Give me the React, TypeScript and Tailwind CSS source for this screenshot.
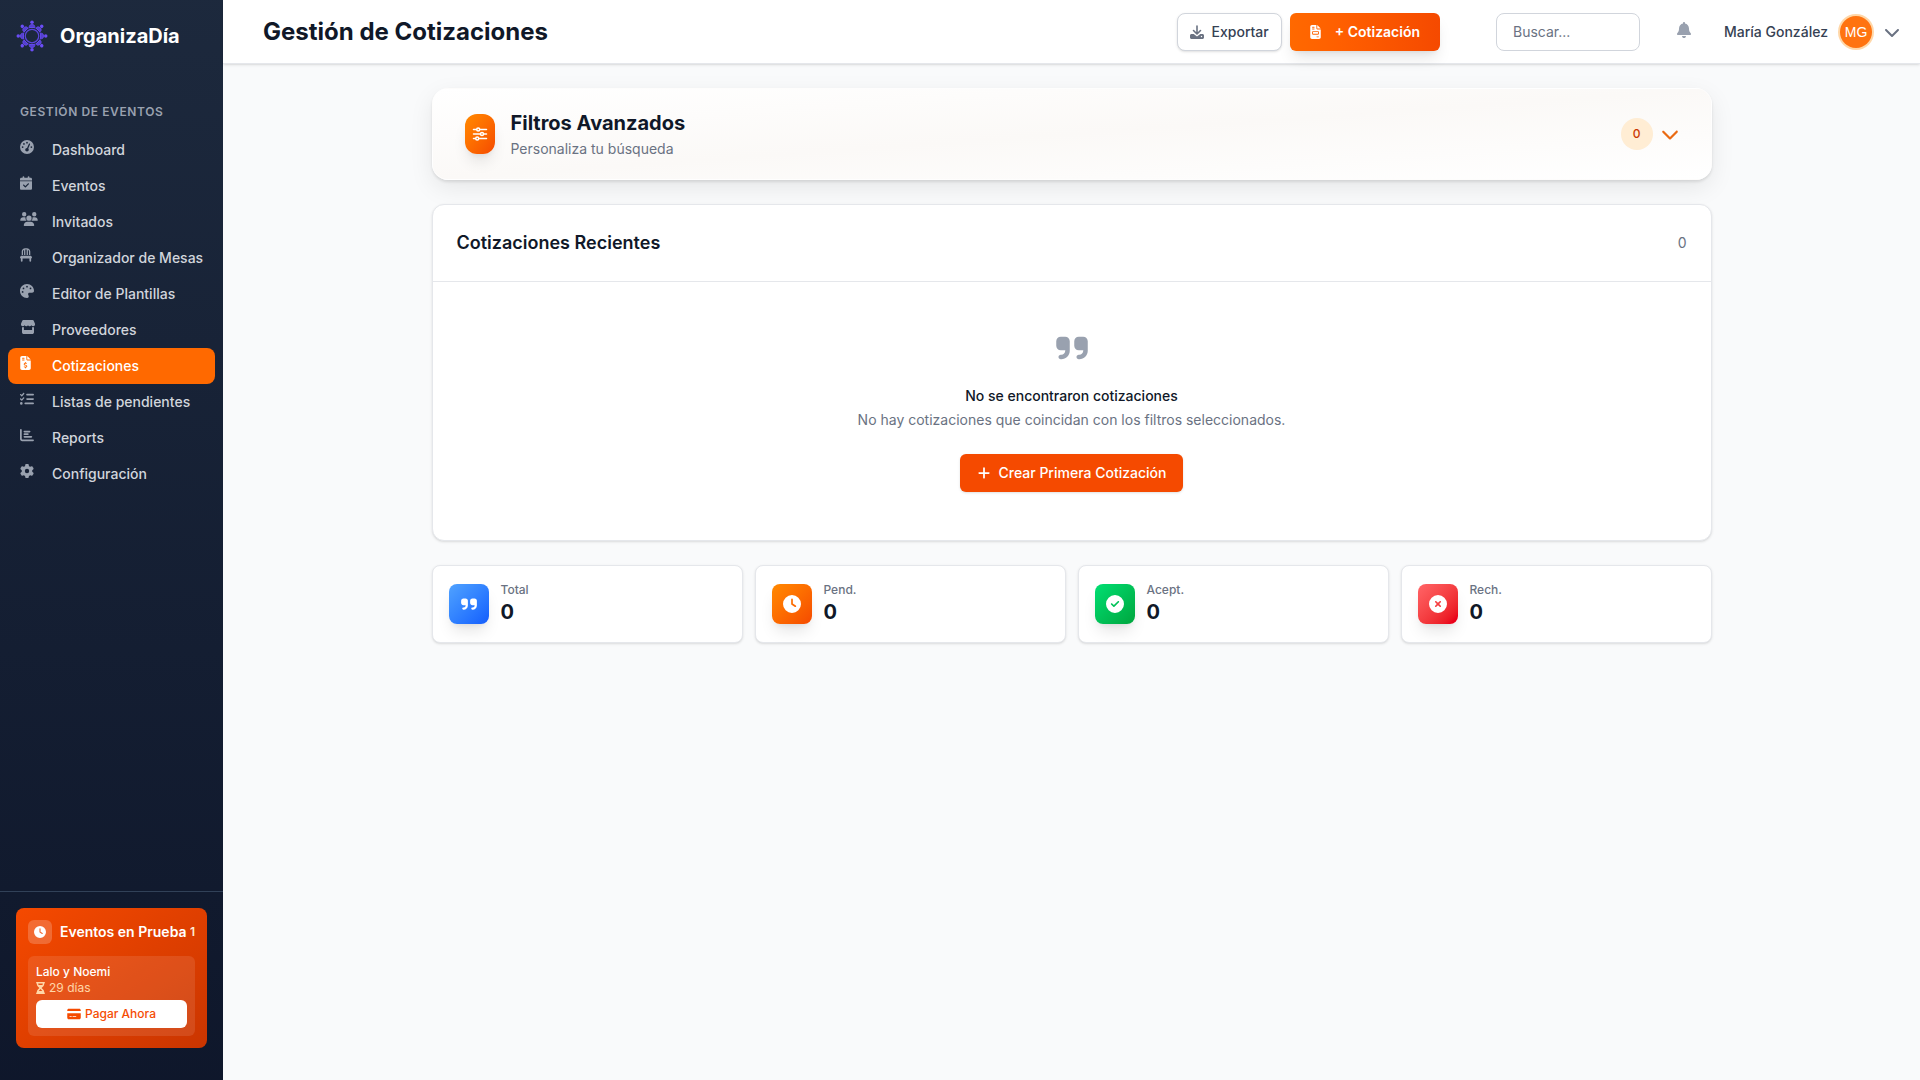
import type { ReactNode } from "react";
import {
  FaBell,
  FaCalendarCheck,
  FaChair,
  FaChartBar,
  FaChevronDown,
  FaCircleCheck,
  FaCircleXmark,
  FaClock,
  FaCreditCard,
  FaFileInvoice,
  FaFileInvoiceDollar,
  FaGaugeHigh,
  FaGear,
  FaHourglassHalf,
  FaListCheck,
  FaPalette,
  FaPlus,
  FaQuoteRight,
  FaUsers,
} from "react-icons/fa6";

const navItems: { label: string; icon: ReactNode; active?: boolean }[] = [
  { label: "Dashboard", icon: <FaGaugeHigh className="size-3.5" /> },
  { label: "Eventos", icon: <FaCalendarCheck className="h-3.5 w-3" /> },
  { label: "Invitados", icon: <FaUsers className="h-3.5 w-[18px]" /> },
  { label: "Organizador de Mesas", icon: <FaChair className="h-3.5 w-3" /> },
  { label: "Editor de Plantillas", icon: <FaPalette className="size-3.5" /> },
  { label: "Proveedores", icon: <StoreIcon /> },
  { label: "Cotizaciones", icon: <FaFileInvoiceDollar className="h-3.5 w-[11px]" />, active: true },
  { label: "Listas de pendientes", icon: <FaListCheck className="size-3.5" /> },
  { label: "Reports", icon: <FaChartBar className="size-3.5" /> },
  { label: "Configuración", icon: <FaGear className="size-3.5" /> },
];

const stats: { label: string; value: number; icon: ReactNode; tone: string }[] = [
  { label: "Total", value: 0, icon: <FaQuoteRight className="size-[18px]" />, tone: "from-blue-400 to-blue-600" },
  { label: "Pend.", value: 0, icon: <FaClock className="size-[18px]" />, tone: "from-orange-400 to-orange-600" },
  { label: "Acept.", value: 0, icon: <FaCircleCheck className="size-[18px]" />, tone: "from-green-400 to-green-600" },
  { label: "Rech.", value: 0, icon: <FaCircleXmark className="size-[18px]" />, tone: "from-red-400 to-red-600" },
];

function Logo() {
  const seats = [0, 45, 90, 135, 180, 225, 270, 315];
  return (
    <svg viewBox="0 0 64 64" className="size-8 shrink-0" fill="none" aria-hidden="true">
      <circle cx="32" cy="32" r="17.500" stroke="#4f3bc4" strokeWidth="2" />
      <circle cx="32" cy="32" r="13.500" stroke="#5b45dc" strokeWidth="2.500" />
      {seats.map((angle) => (
        <g key={angle} transform={`rotate(${angle} 32 32)`}>
          <circle cx="32" cy="4.500" r="3.500" fill="#6a4df5" />
          <path d="M26.500 15v-2c0-5.500 11-5.500 11 0v2Z" fill="#5540cf" stroke="#6a4df5" strokeWidth="1.500" strokeLinejoin="round" />
        </g>
      ))}
    </svg>
  );
}

function StoreIcon() {
  return (
    <svg viewBox="0 0 16 14" className="h-3.5 w-4" fill="currentColor" aria-hidden="true">
      <path d="M3.300 0h9.400c.4 0 .7.200.9.500l1.300 2.900c.6 1.500-.4 2.800-1.700 2.800-.8 0-1.400-.4-1.800-.9-.4.500-1 .9-1.700.9s-1.300-.4-1.700-.9c-.4.500-1 .9-1.700.9s-1.300-.4-1.700-.9c-.4.500-1 .9-1.800.9C1.500 6.200.5 4.900 1.100 3.400L2.400.5c.2-.3.500-.5.900-.5Z" />
      <path d="M2 7.200c.3.100.6.100.9.100.3 0 .7-.1 1-.200V10h8.200V7.100c.3.100.7.200 1 .200.300 0 .6 0 .9-.1v5c0 1-.8 1.800-1.800 1.800H3.800c-1 0-1.800-.8-1.800-1.800v-5Z" />
    </svg>
  );
}

function SlidersIcon() {
  return (
    <svg viewBox="0 0 16 16" className="size-4" fill="none" stroke="currentColor" strokeWidth="1.5" strokeLinecap="round" aria-hidden="true">
      <path d="M1.5 3.5h3M8 3.5h6.5M1.5 8h6.5M12 8h2.5M1.5 12.5h2M7 12.5h7.5" />
      <circle cx="6.2" cy="3.5" r="1.5" />
      <circle cx="10" cy="8" r="1.5" />
      <circle cx="5.2" cy="12.5" r="1.5" />
    </svg>
  );
}

function DownloadIcon() {
  return (
    <svg viewBox="0 0 14 14" className="size-3.5 text-gray-500" fill="none" aria-hidden="true">
      <path d="M7 1v7.500M3.500 5.500 7 9l3.500-3.500" stroke="currentColor" strokeWidth="1.600" strokeLinecap="round" strokeLinejoin="round" />
      <path
        fillRule="evenodd"
        fill="currentColor"
        d="M1.500 9h2.200L7 11.400 10.300 9h2.200c.8 0 1.500.7 1.500 1.500v2c0 .8-.7 1.500-1.500 1.500h-11C.7 14 0 13.300 0 12.500v-2C0 9.700.7 9 1.500 9Zm10 3.200a.7.7 0 1 0 0-1.400.7.700 0 0 0 0 1.400Z"
      />
    </svg>
  );
}

function Sidebar() {
  return (
    <aside className="flex w-[223px] shrink-0 flex-col bg-linear-to-b from-slate-800 to-slate-900">
      <div className="flex items-center gap-3 px-4 pt-5">
        <Logo />
        <span className="text-xl font-bold text-white">OrganizaDía</span>
      </div>

      <nav className="mt-12 flex-1 px-2" aria-label="Gestión de eventos">
        <h2 className="px-3 pt-1 pb-3 text-xs font-semibold tracking-wider text-gray-400 uppercase">Gestión de Eventos</h2>
        <ul>
          {navItems.map(({ label, icon, active }) => (
            <li key={label}>
              <a
                href="#"
                aria-current={active ? "page" : undefined}
                className={
                  active
                    ? "flex gap-3 rounded-lg bg-orange-500 px-3 py-2 text-sm font-medium whitespace-nowrap text-white"
                    : "flex gap-3 px-3 py-2 text-sm font-medium whitespace-nowrap text-gray-300"
                }
              >
                <span className={active ? "h-5 w-5 shrink-0 text-white" : "h-5 w-5 shrink-0 text-gray-400"}>{icon}</span>
                {label}
              </a>
            </li>
          ))}
        </ul>
      </nav>

      <div className="border-t border-slate-700 px-4 pt-4 pb-8">
        <section className="rounded-lg bg-linear-to-br from-orange-600 to-orange-700 p-3">
          <div className="flex items-center gap-2 whitespace-nowrap">
            <span className="flex size-6 shrink-0 items-center justify-center rounded-md bg-white/20 text-white">
              <FaClock className="size-3" />
            </span>
            <div className="flex flex-1 items-center justify-between text-white">
              <h3 className="text-sm font-semibold">Eventos en Prueba</h3>
              <span className="text-xs font-semibold text-orange-100">1</span>
            </div>
          </div>
          <div className="mt-3 rounded-md bg-white/10 p-2 text-xs">
            <p className="font-medium text-white">Lalo y Noemi</p>
            <p className="flex items-center gap-1 text-orange-200">
              <FaHourglassHalf className="h-3 w-[9px]" />
              29 días
            </p>
            <button type="button" className="mt-1 flex h-7 w-full items-center justify-center gap-1 rounded-md bg-white font-medium text-orange-600">
              <FaCreditCard className="h-3 w-3.5" />
              Pagar Ahora
            </button>
          </div>
        </section>
      </div>
    </aside>
  );
}

function Header() {
  return (
    <header className="relative flex h-16 items-center justify-between border-b border-gray-200 bg-white pr-5 pl-10 shadow-sm">
      <h1 className="text-2xl font-bold text-gray-900">Gestión de Cotizaciones</h1>
      <div className="flex items-center">
        <button type="button" className="flex h-[38px] items-center gap-2 rounded-lg border border-gray-300 bg-white px-3 text-sm font-medium text-gray-700 shadow-sm">
          <DownloadIcon />
          Exportar
        </button>
        <button type="button" className="ml-2 flex h-[38px] items-center gap-3.5 rounded-md bg-linear-to-r from-orange-500 to-orange-600 px-5 text-sm font-semibold text-white shadow-lg">
          <FaFileInvoice className="h-3.5 w-[11px]" />
          + Cotización
        </button>
        <input
          type="search"
          aria-label="Buscar"
          placeholder="Buscar..."
          className="ml-14 h-[38px] w-36 rounded-lg border border-gray-300 bg-white px-4 text-sm text-gray-700 placeholder:text-gray-500"
        />
        <button type="button" aria-label="Notificaciones" className="ml-9 pb-1 text-gray-400">
          <FaBell className="size-4" />
        </button>
        <button type="button" className="ml-8 flex items-center gap-3 text-sm font-medium text-gray-700">
          María González
          <span className="flex size-8 items-center justify-center rounded-full bg-[#ff7310] font-['Liberation_Sans',sans-serif] text-sm font-normal text-white ring-2 ring-orange-200">MG</span>
          <FaChevronDown className="size-4 text-gray-500" />
        </button>
      </div>
    </header>
  );
}

function FilterPanel() {
  return (
    <button
      type="button"
      aria-expanded="false"
      className="flex w-full items-center gap-4 rounded-2xl border border-white/50 bg-linear-to-br from-white via-[#fbf9f7] to-white px-8 py-5 text-left shadow-[0_2px_3px_rgba(0,0,0,0.1),0_8px_24px_rgba(0,0,0,0.08)]"
    >
      <span className="flex h-10 w-[30px] shrink-0 items-center justify-center rounded-xl bg-linear-to-br from-orange-400 to-orange-600 text-white shadow-lg">
        <SlidersIcon />
      </span>
      <span className="flex flex-1 flex-col gap-0.5">
        <span className="text-xl font-bold text-gray-900">Filtros Avanzados</span>
        <span className="text-sm text-gray-500">Personaliza tu búsqueda</span>
      </span>
      <span className="flex items-center gap-2 text-[#ea6a12]">
        <span className="flex size-8 items-center justify-center rounded-full bg-orange-100 text-xs font-medium text-orange-700">0</span>
        <FaChevronDown className="size-[18px]" />
      </span>
    </button>
  );
}

function RecentQuotes() {
  return (
    <section className="rounded-xl border border-gray-200 bg-white shadow-sm">
      <div className="flex h-[77px] items-center justify-between border-b border-gray-200 px-6">
        <h2 className="text-lg font-semibold text-gray-900">Cotizaciones Recientes</h2>
        <span className="text-sm text-gray-500">0</span>
      </div>
      <div className="flex flex-col items-center py-12 text-sm">
        <FaQuoteRight className="size-9 text-gray-400" />
        <h3 className="mt-5 font-medium text-gray-900">No se encontraron cotizaciones</h3>
        <p className="mt-1 text-gray-500">No hay cotizaciones que coincidan con los filtros seleccionados.</p>
        <button type="button" className="mt-6 flex h-[38px] items-center gap-2 rounded-md border border-transparent bg-orange-600 px-4 font-medium text-white shadow-sm">
          <FaPlus className="size-3.5" />
          Crear Primera Cotización
        </button>
      </div>
    </section>
  );
}

function Stats() {
  return (
    <dl className="grid grid-cols-4 gap-3">
      {stats.map(({ label, value, icon, tone }) => (
        <div key={label} className="flex items-center gap-3 rounded-lg border border-gray-200 bg-white p-4 shadow-sm">
          <span className={`flex size-10 items-center justify-center rounded-lg bg-linear-to-br text-white shadow-lg ${tone}`}>{icon}</span>
          <div>
            <dt className="text-xs font-medium text-gray-500">{label}</dt>
            <dd className="text-xl font-bold text-gray-900">{value}</dd>
          </div>
        </div>
      ))}
    </dl>
  );
}

export default function App() {
  return (
    <div className="flex min-h-screen bg-gray-50 font-['Inter',sans-serif]">
      <Sidebar />
      <div className="min-w-0 flex-1">
        <Header />
        <main className="mx-auto flex max-w-[1328px] flex-col gap-6 p-6">
          <FilterPanel />
          <RecentQuotes />
          <Stats />
        </main>
      </div>
    </div>
  );
}
